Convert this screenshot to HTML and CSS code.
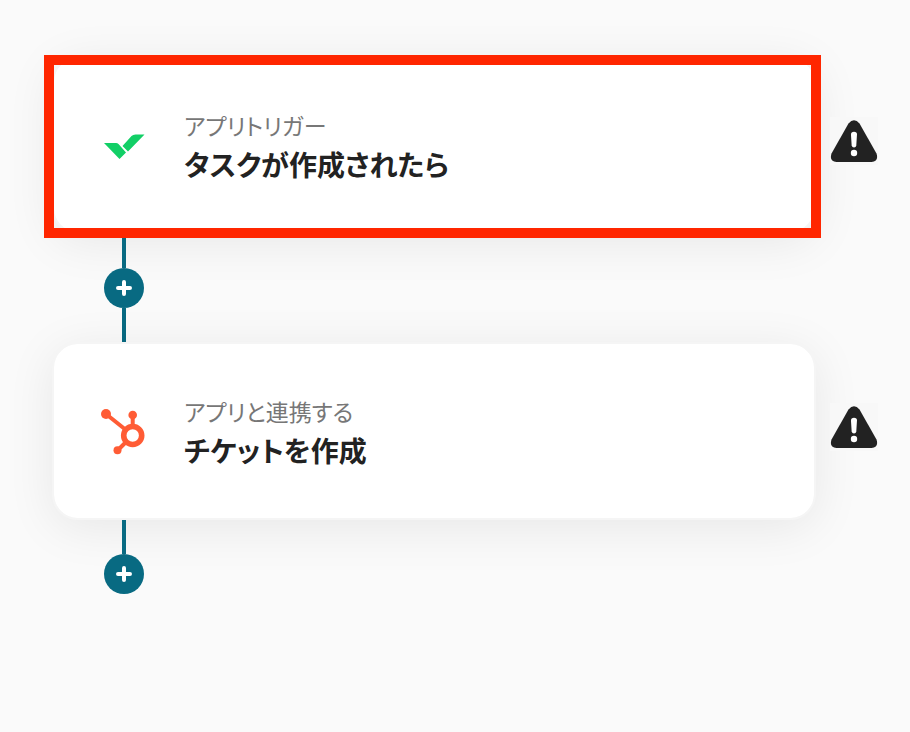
FILE: index.html
```
<!DOCTYPE html>
<html lang="ja">
  <head>
    <meta charset="UTF-8">
    <title>フローボット</title>
    <link rel="stylesheet" href="styles.css">
  </head>
  <body>
    <main class="flow">
      <section class="step">
        <div class="card selected">
          <svg class="app_icon" viewBox="0 0 48 48">
            <path fill="#12cf66" d="M4 22h12q1.500 0 2.500 1l7.500 8.500-6.500 6.500zM22.500 25l9-10q1.500-1.500 4-1.500h9L28 30.500z"/>
          </svg>
          <div class="texts">
            <p class="label">アプリトリガー</p>
            <h2 class="title">タスクが作成されたら</h2>
          </div>
        </div>
        <svg class="warning" viewBox="0 0 48 48" role="img" aria-label="警告">
          <path fill="#222" d="M18.500 6.500Q24 0 29.500 6.500L46.500 36.500Q49 44.500 41.500 45H6.500Q-1 44.500 1.500 36.500z"/>
          <path fill="#fff" d="M21 17.500q0-2.800 3-2.800t3 2.800L26.300 28.500q-.3 2-2.300 2t-2.300-2z"/>
          <circle fill="#fff" cx="24" cy="36" r="3.200"/>
        </svg>
      </section>
      <div class="joint">
        <span class="line"></span>
        <button class="add" type="button" aria-label="追加">
          <svg class="plus" viewBox="0 0 16 16"><path d="M8 2v12M2 8h12"/></svg>
        </button>
        <span class="line"></span>
      </div>
      <section class="step">
        <div class="card">
          <svg class="app_icon" viewBox="0 0 48 48">
            <g fill="none" stroke="#ff5c35">
              <circle cx="32.700" cy="28.500" r="9" stroke-width="5.600"/>
              <path stroke-width="4" d="M6 7l20 16M32.700 8v12M26 35l-8 8"/>
            </g>
            <g fill="#ff5c35">
              <circle cx="6" cy="7" r="5"/>
              <circle cx="32.700" cy="8" r="4.300"/>
              <circle cx="17.500" cy="43.300" r="4"/>
            </g>
          </svg>
          <div class="texts">
            <p class="label">アプリと連携する</p>
            <h2 class="title">チケットを作成</h2>
          </div>
        </div>
        <svg class="warning" viewBox="0 0 48 48" role="img" aria-label="警告">
          <path fill="#222" d="M18.500 6.500Q24 0 29.500 6.500L46.500 36.500Q49 44.500 41.500 45H6.500Q-1 44.500 1.500 36.500z"/>
          <path fill="#fff" d="M21 17.500q0-2.800 3-2.800t3 2.800L26.300 28.500q-.3 2-2.300 2t-2.300-2z"/>
          <circle fill="#fff" cx="24" cy="36" r="3.200"/>
        </svg>
      </section>
      <div class="joint">
        <span class="line"></span>
        <button class="add" type="button" aria-label="追加">
          <svg class="plus" viewBox="0 0 16 16"><path d="M8 2v12M2 8h12"/></svg>
        </button>
      </div>
    </main>
  </body>
</html>
```
FILE: styles.css
```
* { box-sizing: border-box; }
body { margin: 0; background: #fafafa; color: #222; font-family: "Noto Sans CJK JP", sans-serif; font-feature-settings: "palt"; }
.flow { padding: 56px 32px 56px 52px; }

.step { display: flex; align-items: center; gap: 14px; }
.card { position: relative; flex: 1; display: flex; align-items: center; gap: 36px; padding: 48px 46px; background: #fff; background-clip: padding-box; border: 2px solid #f5f5f5; border-radius: 26px; box-shadow: 0 8px 48px rgba(0, 0, 0, 0.08); }
/* red frame over the selected card */
.selected::after { content: ""; position: absolute; top: -3px; right: -7px; bottom: -6px; left: -10px; border: 10px solid #ff2600; z-index: 1; }

.app_icon { width: 48px; height: 48px; flex: none; }
.label { margin: 0; color: #777; font-size: 23px; line-height: 38px; }
.title { margin: 0; font-size: 28px; font-weight: bold; line-height: 40px; }
.warning { position: relative; width: 48px; height: 48px; margin-bottom: 8px; flex: none; background: #f8f8f8; }

.joint { position: relative; width: 40px; margin-left: 52px; display: flex; flex-direction: column; align-items: center; }
.line { width: 4px; height: 34px; background: #086a82; }
.add { display: flex; align-items: center; justify-content: center; width: 40px; height: 40px; padding: 0; border: 0; border-radius: 50%; background: #086a82; cursor: pointer; }
.plus { width: 16px; height: 16px; fill: none; stroke: #fff; stroke-width: 4; stroke-linecap: round; }
```
